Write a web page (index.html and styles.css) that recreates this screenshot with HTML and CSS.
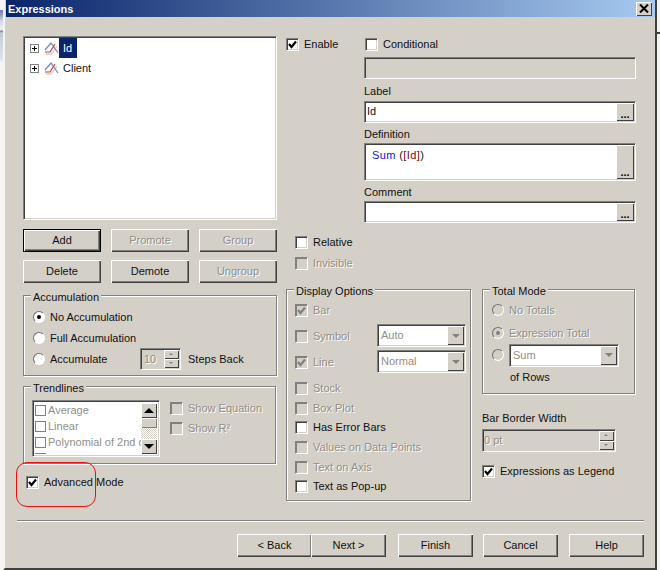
FILE: index.html
```html
<!DOCTYPE html>
<html lang="en">
<head>
<meta charset="utf-8">
<title>Expressions</title>
<link rel="stylesheet" href="styles.css">
</head>
<body>
<svg class="sprites" width="0" height="0" aria-hidden="true">
  <symbol id="tick" viewBox="0 0 11 11"><path d="M2 5 L4.5 8 L9 2.5" fill="none" stroke="currentColor" stroke-width="2.2"/></symbol>
  <symbol id="chart" viewBox="0 0 15 14">
    <path d="M1 12 L6 12 L12 4" fill="none" stroke="#ecd4d4" stroke-width="2" transform="translate(1 1)"/>
    <path d="M1 9 L7 2 L14 12" fill="none" stroke="#6f86c8" stroke-width="1.2"/>
    <path d="M1 11 L6 11 L11 3" fill="none" stroke="#c84040" stroke-width="1.2"/>
  </symbol>
  <symbol id="plus" viewBox="0 0 9 9">
    <rect x=".5" y=".5" width="8" height="8" fill="#fff" stroke="#808080"/>
    <path d="M2 4.5 H7 M4.5 2 V7" stroke="#000" stroke-width="1"/>
  </symbol>
  <symbol id="close" viewBox="0 0 10 9"><path d="M1 0.5 L9 8.5 M9 0.5 L1 8.5" stroke="#000" stroke-width="2"/></symbol>
</svg>
<div class="screen">
  <div class="back-left"></div>
  <div class="dialog">
    <header class="titlebar">
      <span class="title-text">Expressions</span>
      <span class="close-btn"><svg class="close-icon"><use href="#close"/></svg></span>
    </header>
    <div class="main">
      <section class="col-left">
        <div class="tree sunken">
          <div class="tree-row">
            <svg class="tree-plus"><use href="#plus"/></svg>
            <svg class="tree-icon"><use href="#chart"/></svg>
            <span class="tree-label selected">Id</span>
          </div>
          <div class="tree-row">
            <svg class="tree-plus"><use href="#plus"/></svg>
            <svg class="tree-icon"><use href="#chart"/></svg>
            <span class="tree-label">Client</span>
          </div>
        </div>
        <div class="btn-grid">
          <button class="btn btn-default">Add</button>
          <button class="btn off">Promote</button>
          <button class="btn off">Group</button>
          <button class="btn">Delete</button>
          <button class="btn">Demote</button>
          <button class="btn off">Ungroup</button>
        </div>
        <div class="group group-acc">
          <span class="legend">Accumulation</span>
          <label class="row acc-row"><span class="radio on"></span><span>No Accumulation</span></label>
          <label class="row acc-row"><span class="radio"></span><span>Full Accumulation</span></label>
          <div class="row acc-row">
            <span class="radio"></span><span class="acc-name">Accumulate</span>
            <span class="spin spin-steps off"><span class="spin-val">10</span><span class="spin-btns"><i class="up"></i><i class="down"></i></span></span>
            <span class="steps">Steps Back</span>
          </div>
        </div>
        <div class="group group-trend">
          <span class="legend">Trendlines</span>
          <div class="trend-list sunken off">
            <div class="list-items">
              <div class="list-row"><span class="mini-box"></span>Average</div>
              <div class="list-row"><span class="mini-box"></span>Linear</div>
              <div class="list-row"><span class="mini-box"></span>Polynomial of 2nd degree</div>
              <div class="list-row"><span class="mini-box"></span>Polynomial of 3rd degree</div>
            </div>
            <div class="scrollbar">
              <span class="sb-btn"><i class="arrow-up"></i></span>
              <span class="sb-thumb"></span>
              <span class="sb-track"></span>
              <span class="sb-btn"><i class="arrow-down"></i></span>
            </div>
          </div>
          <div class="trend-opts off">
            <label class="row"><span class="check dis"></span><span>Show Equation</span></label>
            <label class="row"><span class="check dis"></span><span>Show R²</span></label>
          </div>
        </div>
        <label class="row advanced">
          <span class="check"><svg class="tick"><use href="#tick"/></svg></span><span>Advanced Mode</span>
        </label>
        <div class="annotation"></div>
      </section>
      <section class="col-right">
        <div class="top-checks">
          <label class="row check-enable"><span class="check"><svg class="tick"><use href="#tick"/></svg></span><span>Enable</span></label>
          <label class="row"><span class="check"></span><span>Conditional</span></label>
        </div>
        <div class="fields">
          <div class="input input-dis sunken"></div>
          <div class="field-label field-label-first">Label</div>
          <div class="input sunken"><span class="input-text">Id</span><span class="dots">...</span></div>
          <div class="field-label">Definition</div>
          <div class="input input-tall sunken"><span class="input-code"><b class="kw">Sum</b> (<b class="fld">[Id]</b>)</span><span class="dots">...</span></div>
          <div class="field-label">Comment</div>
          <div class="input sunken"><span class="input-text"></span><span class="dots">...</span></div>
        </div>
        <div class="mid-checks">
          <label class="row"><span class="check"></span><span>Relative</span></label>
          <label class="row off"><span class="check dis"></span><span>Invisible</span></label>
        </div>
        <div class="options">
          <div class="group group-display">
            <span class="legend">Display Options</span>
            <label class="row off"><span class="check dis"><svg class="tick"><use href="#tick"/></svg></span><span>Bar</span></label>
            <div class="row off"><span class="check dis"></span><span class="opt-name">Symbol</span><span class="combo sunken"><span class="combo-val">Auto</span><span class="combo-btn"><i class="arrow-down"></i></span></span></div>
            <div class="row off"><span class="check dis"><svg class="tick"><use href="#tick"/></svg></span><span class="opt-name">Line</span><span class="combo sunken"><span class="combo-val">Normal</span><span class="combo-btn"><i class="arrow-down"></i></span></span></div>
            <label class="row off"><span class="check dis"></span><span>Stock</span></label>
            <label class="row off"><span class="check dis"></span><span>Box Plot</span></label>
            <label class="row"><span class="check"></span><span>Has Error Bars</span></label>
            <label class="row off"><span class="check dis"></span><span>Values on Data Points</span></label>
            <label class="row off"><span class="check dis"></span><span>Text on Axis</span></label>
            <label class="row"><span class="check"></span><span>Text as Pop-up</span></label>
          </div>
          <div class="col-total">
            <div class="group group-total off">
              <span class="legend legend-on">Total Mode</span>
              <label class="row"><span class="radio dis"></span><span>No Totals</span></label>
              <label class="row"><span class="radio dis on"></span><span>Expression Total</span></label>
              <div class="row"><span class="radio dis"></span><span class="combo combo-sum sunken"><span class="combo-val">Sum</span><span class="combo-btn"><i class="arrow-down"></i></span></span></div>
              <div class="of-rows">of Rows</div>
            </div>
            <div class="border-label">Bar Border Width</div>
            <div class="spin spin-border off"><span class="spin-val">0 pt</span><span class="spin-btns"><i class="up"></i><i class="down"></i></span></div>
            <label class="row legend-check"><span class="check"><svg class="tick"><use href="#tick"/></svg></span><span>Expressions as Legend</span></label>
          </div>
        </div>
      </section>
    </div>
    <footer class="footer">
      <button class="btn btn-foot">&lt; Back</button>
      <button class="btn btn-foot btn-next">Next &gt;</button>
      <button class="btn btn-foot">Finish</button>
      <button class="btn btn-foot btn-cancel">Cancel</button>
      <button class="btn btn-foot">Help</button>
    </footer>
  </div>
  <div class="back-right"><span class="back-rule"></span></div>
</div>
</body>
</html>
```
FILE: styles.css
```css
* { box-sizing: border-box; }
html, body { margin: 0; padding: 0; }
body { width: 660px; height: 570px; overflow: hidden; background: #f2f2f0; font: 11px/14px "Liberation Sans", Arial, sans-serif; color: #111; }
.sprites { position: absolute; }
.screen { display: flex; width: 660px; height: 570px; }
.back-left { width: 3px; background: linear-gradient(#f4f4f4 0, #f4f4f4 10px, #6a78b8 10px, #d8dce8 22px, #f0f0f0 30px, #808080 31px, #c0cdd6 33px, #dfe6ea 60px, #f6f6f4 62px); }
.back-right { width: 3px; padding-top: 32px; }
.back-rule { display: block; height: 2px; background: #404040; }
.dialog { width: 654px; height: 570px; background: #d4d0c8; border-left: 2px solid #f4f4f2; border-right: 2px solid #404040; border-bottom: 2px solid #404040; display: flex; flex-direction: column; padding-left: 1px; }

.titlebar { height: 17px; display: flex; align-items: center; justify-content: space-between; padding: 0 3px 0 2px; background: linear-gradient(90deg, #0a246a, #a6caf0); flex: none; }
.title-text { color: #fff; font-weight: bold; font-size: 11px; }
.close-btn { width: 16px; height: 14px; background: #d4d0c8; display: flex; align-items: center; justify-content: center; box-shadow: inset 1px 1px 0 #fff, inset -1px -1px 0 #404040; }
.close-icon { width: 10px; height: 9px; }

.main { height: 503px; flex: none; display: grid; grid-template-columns: 254px 350px; column-gap: 9px; padding: 19px 0 0 17px; }
.col-left { position: relative; display: flex; flex-direction: column; }
.col-right { display: flex; flex-direction: column; }

.sunken { background: #fff; border: 1px solid; border-color: #808080 #fff #fff #808080; box-shadow: inset 1px 1px 0 #404040, inset -1px -1px 0 #d4d0c8; }
.off { color: #908e88; text-shadow: 1px 1px 0 #fff; }

.row { display: flex; align-items: center; height: 14px; }
.check { flex: none; position: relative; width: 13px; height: 13px; margin-right: 5px; background: #fff; border: 1px solid; border-color: #808080 #fff #fff #808080; box-shadow: inset 1px 1px 0 #404040, inset -1px -1px 0 #d4d0c8; color: #000; }
.check.dis { background: #d4d0c8; box-shadow: inset 1px 1px 0 #808080; color: #808080; }
.tick { display: block; width: 11px; height: 11px; }
.radio { flex: none; position: relative; width: 12px; height: 12px; margin-right: 5px; border-radius: 50%; background: #fff; border: 1px solid; border-color: #707070 #fff #fff #707070; }
.radio.dis { background: #d4d0c8; }
.radio.on::after { content: ""; position: absolute; left: 3px; top: 3px; width: 4px; height: 4px; border-radius: 50%; background: #000; }
.radio.dis.on::after { background: #808080; }

.tree { height: 184px; padding: 1px 0 0 6px; }
.tree-row { display: flex; align-items: center; height: 20px; }
.tree-plus { width: 9px; height: 9px; margin-right: 5px; }
.tree-icon { width: 15px; height: 14px; }
.tree-label { height: 20px; line-height: 20px; padding: 0 5px 0 4px; }
.tree-label.selected { background: #0a246a; color: #fff; }

.btn { font: inherit; color: #111; height: 23px; padding: 0 0 2px; background: #d4d0c8; border: 0; box-shadow: inset 1px 1px 0 #fff, inset -1px -1px 0 #404040, inset -2px -2px 0 #808080; }
.btn-default { outline: 1px solid #000; outline-offset: -1px; box-shadow: inset 2px 2px 0 #fff, inset -1px -1px 0 #000, inset -2px -2px 0 #404040, inset -3px -3px 0 #808080; }
.btn-grid { display: grid; grid-template-columns: 78px 78px 78px; column-gap: 10px; row-gap: 8px; margin-top: 9px; }
.btn.off { color: #908e88; text-shadow: 1px 1px 0 #fff; }

.group { position: relative; border: 1px solid #808080; box-shadow: 1px 1px 0 #fff, inset 1px 1px 0 #fff; }
.legend { position: absolute; top: -6px; left: 7px; padding: 0 2px; background: #d4d0c8; color: #111; }
.legend-on { text-shadow: none; }

.group-acc { height: 81px; margin-top: 12px; padding: 14px 0 0 9px; display: flex; flex-direction: column; row-gap: 7px; }
.acc-name { width: 90px; }
.spin { display: flex; background: #d4d0c8; border: 1px solid; border-color: #808080 #fff #fff #808080; box-shadow: inset 1px 1px 0 #404040; }
.spin-steps { width: 41px; height: 22px; margin-right: 7px; }
.spin-val { flex: 1; padding: 2px 0 0 3px; line-height: 16px; }
.spin-btns { width: 16px; display: flex; flex-direction: column; padding: 1px 1px 1px 0; }
.spin-btns i { flex: 1; background: #d4d0c8; position: relative; box-shadow: inset 1px 1px 0 #fff, inset -1px -1px 0 #404040; }
.spin-btns i::after { content: ""; position: absolute; left: 5px; top: 3px; border: 2px solid transparent; }
.spin-btns .up::after { border-bottom-color: #808080; border-top-width: 0; }
.spin-btns .down::after { border-top-color: #808080; border-bottom-width: 0; }
.steps { color: #111; text-shadow: none; }

.group-trend { height: 78px; width: 253px; margin-top: 10px; padding: 13px 0 0 8px; display: flex; }
.trend-list { width: 128px; height: 57px; display: flex; overflow: hidden; padding: 2px; }
.list-items { width: 107px; margin-top: -1px; overflow: hidden; white-space: nowrap; }
.list-row { display: flex; align-items: center; height: 16px; }
.mini-box { flex: none; width: 11px; height: 11px; margin-right: 2px; border: 1px solid #808080; box-shadow: 1px 1px 0 #fff; }
.scrollbar { width: 16px; flex: none; display: flex; flex-direction: column; }
.sb-btn { height: 15px; background: #d4d0c8; display: flex; align-items: center; justify-content: center; box-shadow: inset 1px 1px 0 #fff, inset -1px -1px 0 #404040; }
.sb-thumb { height: 10px; background: #d4d0c8; box-shadow: inset 1px 1px 0 #fff, inset -1px -1px 0 #808080; }
.sb-track { flex: 1; background: repeating-conic-gradient(#d4d0c8 0 25%, #fff 0 50%) 0 0 / 2px 2px; }
.arrow-up, .arrow-down { display: block; width: 0; height: 0; border: 5px solid transparent; }
.arrow-up { border-bottom-color: #000; border-top-width: 0; }
.arrow-down { border-top-color: #000; border-bottom-width: 0; }
.trend-opts { display: flex; flex-direction: column; row-gap: 6px; margin-left: 10px; padding-top: 1px; }

.advanced { margin: 11px 0 0 3px; }
.annotation { position: absolute; left: -7px; top: 426px; width: 80px; height: 45px; border: 1px solid #e81010; border-radius: 11px; }

.top-checks { display: flex; padding-top: 1px; }
.check-enable { width: 79px; }
.fields { margin: 6px 0 0 78px; width: 272px; }
.input { display: flex; justify-content: space-between; height: 22px; }
.input-dis { background: #d4d0c8; box-shadow: inset 1px 1px 0 #404040; }
.field-label { height: 20px; line-height: 23px; }
.field-label-first { height: 22px; line-height: 25px; }
.input-tall { height: 38px; }
.input-text { padding: 1px 0 0 2px; line-height: 16px; }
.input-code { padding: 3px 0 0 7px; line-height: 16px; letter-spacing: .4px; }
.kw { font-weight: normal; color: #1010e0; }
.fld { font-weight: normal; color: #800000; }
.dots { width: 18px; margin: 1px 1px 1px 0; background: #d4d0c8; display: flex; align-items: flex-end; justify-content: center; font-weight: bold; line-height: 9px; padding-bottom: 2px; color: #000; box-shadow: inset 1px 1px 0 #fff, inset -1px -1px 0 #404040; }

.mid-checks { display: flex; flex-direction: column; row-gap: 7px; margin: 12px 0 0 9px; }

.options { display: flex; align-items: flex-start; margin-top: 19px; }
.group-display { width: 185px; height: 212px; padding: 13px 0 0 8px; display: grid; grid-template-rows: 26px 26px 26px 20px 19px 20px 20px 19px 14px; }
.opt-name { width: 64px; }
.combo { display: flex; width: 89px; height: 23px; margin-top: -1px; color: inherit; }
.combo-val { flex: 1; padding: 2px 0 0 3px; line-height: 17px; }
.combo-btn { width: 17px; margin: 1px 1px 1px 0; background: #d4d0c8; display: flex; align-items: center; justify-content: center; box-shadow: inset 1px 1px 0 #fff, inset -1px -1px 0 #404040; }
.combo-btn .arrow-down { border-width: 4px; border-bottom-width: 0; border-top-color: #808080; }
.col-total { width: 153px; margin-left: 11px; }
.group-total { width: 153px; height: 105px; padding: 13px 0 0 9px; display: grid; grid-template-rows: 23px 22px 22px 14px; }
.combo-sum { width: 110px; margin: 0; flex: none; }
.of-rows { padding-left: 18px; color: #111; text-shadow: none; }
.border-label { margin-top: 17px; }
.spin-border { width: 134px; height: 23px; margin-top: 4px; }
.spin-border .spin-val { padding-left: 1px; }
.legend-check { margin-top: 12px; }

.footer { flex: 1; margin: 0 11px; padding-top: 13px; border-top: 1px solid #808080; box-shadow: inset 0 1px 0 #fff; display: flex; align-items: flex-start; justify-content: flex-end; }
.btn-foot { width: 75px; margin-left: 10px; }
.btn-next { margin-left: -1px; margin-right: 2px; }
.btn-cancel { margin-right: 1px; }
```
